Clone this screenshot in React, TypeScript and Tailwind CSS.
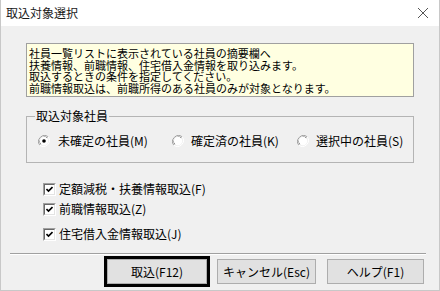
import React from "react";

const font = { fontFamily: '"Noto Sans CJK JP", "Noto Sans", sans-serif' };

function Radio({ checked }: { checked?: boolean }) {
  return (
    <svg width="12" height="12" viewBox="0 0 12 12" className="shrink-0">
      <path d="M10.2 1.8 A6 6 0 0 0 1.8 10.2" fill="none" stroke="#a0a0a0" strokeWidth="1" />
      <path d="M9.3 2.7 A4.8 4.8 0 0 0 2.7 9.3" fill="none" stroke="#696969" strokeWidth="1" />
      <circle cx="6" cy="6" r="4.2" fill="#ffffff" />
      <path d="M1.8 10.2 A6 6 0 0 0 10.2 1.8" fill="none" stroke="#ffffff" strokeWidth="1" />
      {checked && <circle cx="6" cy="6" r="1.8" fill="#000000" />}
    </svg>
  );
}

function Check() {
  return (
    <div className="w-[13px] h-[13px] shrink-0 border-t border-l border-[#a0a0a0] border-r border-b border-r-white border-b-white">
      <div className="w-full h-full border-t border-l border-[#696969] border-r border-b border-r-[#e3e3e3] border-b-[#e3e3e3] bg-white flex items-center justify-center">
        <svg width="7" height="7" viewBox="0 0 7 7">
          <path d="M0.5 3 L2.5 5 L6.5 1" fill="none" stroke="#000" strokeWidth="1.6" />
        </svg>
      </div>
    </div>
  );
}

export default function App() {
  return (
    <div
      className="w-[440px] h-[291px] bg-[#f0f0f0] text-black text-[12px] overflow-hidden flex flex-col border-l border-r border-b border-[#c8c8c8]"
      style={font}
    >
      <div className="h-[26px] bg-white flex items-center justify-between pl-[5px] pr-[10px] shrink-0">
        <span className="text-[12px] text-[#1a1a1a] leading-none">取込対象選択</span>
        <svg width="12" height="12" viewBox="0 0 12 12">
          <path d="M1 1 L11 11 M11 1 L1 11" stroke="#555" strokeWidth="1" fill="none" />
        </svg>
      </div>

      <div className="pl-[25px] pr-[26px]">
        <div className="mt-[17px] w-[388px] h-[54px] border border-[#a0a0a0] bg-[#ffffe1] pl-[2px] pt-[4px] text-[11px] leading-[11.5px]">
          <div>社員一覧リストに表示されている社員の摘要欄へ</div>
          <div>扶養情報、前職情報、住宅借入金情報を取り込みます。</div>
          <div>取込するときの条件を指定してください。</div>
          <div>前職情報取込は、前職所得のある社員のみが対象となります。</div>
        </div>

        <fieldset className="mt-[12px] w-[388px] border border-[#b4b4b4] pl-[11px] pt-[11px] pb-[14px]">
          <legend className="ml-[-3px] px-[1px] leading-[14px]">取込対象社員</legend>
          <div className="flex items-center h-[14px]">
            <div className="w-[134px] flex items-center gap-[8px]">
              <Radio checked />
              <span>未確定の社員(M)</span>
            </div>
            <div className="w-[125px] flex items-center gap-[7px]">
              <Radio />
              <span>確定済の社員(K)</span>
            </div>
            <div className="flex items-center gap-[7px]">
              <Radio />
              <span>選択中の社員(S)</span>
            </div>
          </div>
        </fieldset>

        <div className="pl-[17px]">
          <div className="mt-[19px] h-[14px] flex items-center gap-[3px]">
            <Check />
            <span>定額減税・扶養情報取込(F)</span>
          </div>
          <div className="mt-[6px] h-[14px] flex items-center gap-[3px]">
            <Check />
            <span>前職情報取込(Z)</span>
          </div>
          <div className="mt-[11px] h-[14px] flex items-center gap-[3px]">
            <Check />
            <span>住宅借入金情報取込(J)</span>
          </div>
        </div>
      </div>

      <div className="mt-[12px] ml-[9px] w-[416px] border-t border-[#a0a0a0] border-b border-b-white" />

      <div className="flex items-center pl-[103px] mt-[1px]">
        <div className="w-[106px] h-[31px] border-[3px] border-black flex">
          <div className="flex-1 bg-[#e1e1e1] border border-[#adadad] flex items-center justify-center">
            取込(F12)
          </div>
        </div>
        <div className="ml-[7px] w-[99px] h-[25px] bg-[#e1e1e1] border border-[#adadad] flex items-center justify-center">
          キャンセル(Esc)
        </div>
        <div className="ml-[11px] w-[97px] h-[25px] bg-[#e1e1e1] border border-[#adadad] flex items-center justify-center">
          ヘルプ(F1)
        </div>
      </div>
    </div>
  );
}
